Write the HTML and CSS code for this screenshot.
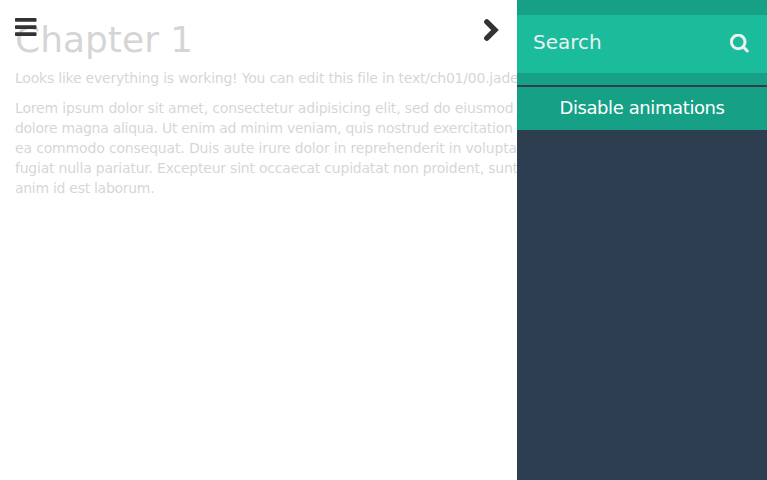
FILE: index.html
```html
<!DOCTYPE html>
<html lang="en">
<head>
<meta charset="utf-8">
<title>Chapter 1</title>
<link rel="stylesheet" href="styles.css">
</head>
<body>
<div class="app">
  <main class="page">
    <article class="content">
      <h1>Chapter 1</h1>
      <p class="medium">Looks like everything is working! You can edit this file in text/ch01/00.jade</p>
      <p><span class="loose">Lorem ipsum dolor sit amet, consectetur adipisicing elit, sed do eiusmod</span><br>dolore magna aliqua. Ut enim ad minim veniam, quis nostrud exercitation<br><span class="loose">ea commodo consequat. Duis aute irure dolor in reprehenderit in volupta</span><br><span class="medium">fugiat nulla pariatur. Excepteur sint occaecat cupidatat non proident, sunt</span><br>anim id est laborum.</p>
    </article>
    <svg class="menu-icon" viewBox="0 0 22 18"><rect width="21.5" height="3.7" rx=".8"/><rect y="7.3" width="21.5" height="3.7" rx=".8"/><rect y="14.3" width="21.5" height="3.7" rx=".8"/></svg>
    <svg class="next-icon" viewBox="0 0 16 24"><path d="M3.8 3.8L12 12L3.8 20.2"/></svg>
  </main>
  <aside class="sidebar">
    <div class="search-wrap">
      <div class="search"><span>Search</span>
        <svg class="search-icon" viewBox="0 0 20 20"><circle cx="9.2" cy="7.9" r="6.8"/><path d="M14.2 12.9L18.3 17"/></svg>
      </div>
    </div>
    <div class="toggle">Disable animations</div>
  </aside>
</div>
</body>
</html>
```
FILE: styles.css
```css
* { box-sizing: border-box; }
body { margin: 0; background: #fff; font-family: "DejaVu Sans", sans-serif; }
.app { display: flex; width: 767px; height: 480px; overflow: hidden; }
.page { position: relative; flex: 0 0 517px; overflow: hidden; }
.content { padding: 20px 0 0 15px; color: #333; opacity: .2; white-space: nowrap; }
h1 { margin: 0 0 8px; font-size: 36px; font-weight: 500; line-height: 40px; }
p { margin: 0 0 10px; font-size: 14px; line-height: 20px; letter-spacing: -.29px; }
.medium { letter-spacing: -.22px; }
.loose { letter-spacing: -.16px; }
.menu-icon { position: absolute; left: 15px; top: 18px; width: 22px; height: 18px; fill: #333; }
.next-icon { position: absolute; left: 483px; top: 18px; width: 16px; height: 24px; fill: none; stroke: #333; stroke-width: 5.4; stroke-linecap: round; }
.sidebar { flex: 0 0 250px; background: #2c3e50; }
.search-wrap { padding: 15px 0 12px; background: #16a085; }
.search { display: flex; align-items: center; justify-content: space-between; height: 58px; padding: 0 18px 4px 16px; background: #1abc9c; color: #ecf0f1; font-size: 20px; }
.search-icon { width: 20px; height: 20px; margin-top: 3px; fill: none; stroke: #ecf0f1; stroke-width: 3; stroke-linecap: round; }
.toggle { margin-top: 2px; height: 43px; line-height: 42px; background: #16a085; color: #fff; font-size: 18px; letter-spacing: -.4px; text-align: center; }
```
